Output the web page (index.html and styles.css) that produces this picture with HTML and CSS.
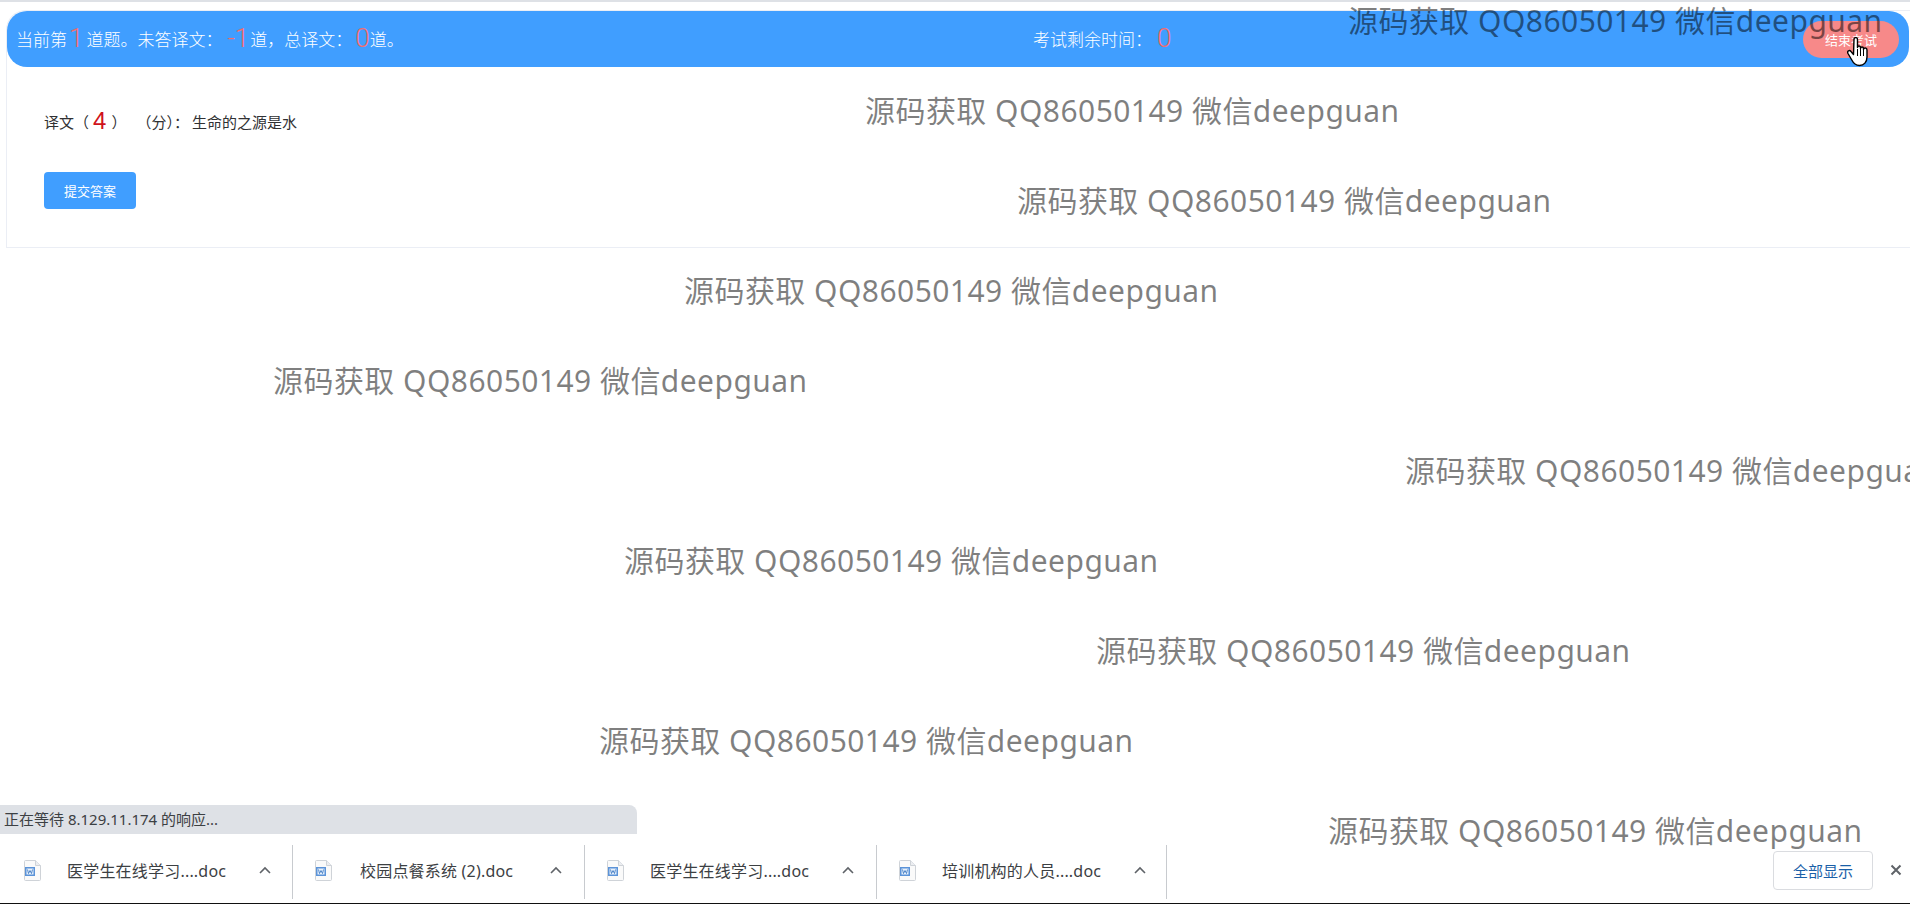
FILE: index.html
```html
<!DOCTYPE html>
<html lang="zh-CN">
<head>
    <meta charset="UTF-8">
    <title>考试</title>
    <link rel="stylesheet" href="styles.css">
</head>
<body>
    <div class="top-strip"></div>
    <main class="page">
        <section class="exam-card">
            <header class="exam-bar">
                <div class="exam-progress">当前第<span class="num num-first">1</span>道题。未答译文：<span class="num num-left">-1</span>道，总译文：<span class="num num-total">0</span>道。</div>
                <div class="exam-time">考试剩余时间：<span class="num num-time">0</span></div>
                <button class="end-btn">结束考试</button>
            </header>
            <div class="question">
                <span>译文（</span><span class="score">4</span><span>）</span><span class="unit">（分）：</span><span class="question-text">生命的之源是水</span>
            </div>
            <button class="submit-btn">提交答案</button>
        </section>
    </main>

    <div class="status-bubble">正在等待 8.129.11.174 的响应...</div>
    <footer class="shelf">
        <div class="shelf-item">
            <svg class="doc-icon" viewBox="0 0 17 21"><path d="M1.5.5h10l5 5v14a1 1 0 0 1-1 1h-14a1 1 0 0 1-1-1V1.500a1 1 0 0 1 1-1z" fill="#fafafa" stroke="#cfd3d8"/><path d="M11.500.5v5h5" fill="#eceef1" stroke="#cfd3d8"/><rect x="1" y="7" width="10" height="9" fill="#5b93d8"/><rect x="2.500" y="8.500" width="7" height="6" fill="#e6f0fb"/><path d="M3.500 9.500l1 4 1.500-3 1.500 3 1-4" fill="none" stroke="#2f6fbe" stroke-width=".8"/></svg>
            <span class="file-name">医学生在线学习....doc</span>
            <svg class="chevron" viewBox="0 0 12 8"><path d="M1 7l5-5 5 5" fill="none" stroke="#5f6368" stroke-width="1.600"/></svg>
        </div>
        <div class="shelf-item">
            <svg class="doc-icon" viewBox="0 0 17 21"><path d="M1.5.5h10l5 5v14a1 1 0 0 1-1 1h-14a1 1 0 0 1-1-1V1.500a1 1 0 0 1 1-1z" fill="#fafafa" stroke="#cfd3d8"/><path d="M11.500.5v5h5" fill="#eceef1" stroke="#cfd3d8"/><rect x="1" y="7" width="10" height="9" fill="#5b93d8"/><rect x="2.500" y="8.500" width="7" height="6" fill="#e6f0fb"/><path d="M3.500 9.500l1 4 1.500-3 1.500 3 1-4" fill="none" stroke="#2f6fbe" stroke-width=".8"/></svg>
            <span class="file-name file-name-wide">校园点餐系统 (2).doc</span>
            <svg class="chevron" viewBox="0 0 12 8"><path d="M1 7l5-5 5 5" fill="none" stroke="#5f6368" stroke-width="1.600"/></svg>
        </div>
        <div class="shelf-item">
            <svg class="doc-icon" viewBox="0 0 17 21"><path d="M1.5.5h10l5 5v14a1 1 0 0 1-1 1h-14a1 1 0 0 1-1-1V1.500a1 1 0 0 1 1-1z" fill="#fafafa" stroke="#cfd3d8"/><path d="M11.500.5v5h5" fill="#eceef1" stroke="#cfd3d8"/><rect x="1" y="7" width="10" height="9" fill="#5b93d8"/><rect x="2.500" y="8.500" width="7" height="6" fill="#e6f0fb"/><path d="M3.500 9.500l1 4 1.500-3 1.500 3 1-4" fill="none" stroke="#2f6fbe" stroke-width=".8"/></svg>
            <span class="file-name">医学生在线学习....doc</span>
            <svg class="chevron" viewBox="0 0 12 8"><path d="M1 7l5-5 5 5" fill="none" stroke="#5f6368" stroke-width="1.600"/></svg>
        </div>
        <div class="shelf-item">
            <svg class="doc-icon" viewBox="0 0 17 21"><path d="M1.5.5h10l5 5v14a1 1 0 0 1-1 1h-14a1 1 0 0 1-1-1V1.500a1 1 0 0 1 1-1z" fill="#fafafa" stroke="#cfd3d8"/><path d="M11.500.5v5h5" fill="#eceef1" stroke="#cfd3d8"/><rect x="1" y="7" width="10" height="9" fill="#5b93d8"/><rect x="2.500" y="8.500" width="7" height="6" fill="#e6f0fb"/><path d="M3.500 9.500l1 4 1.500-3 1.500 3 1-4" fill="none" stroke="#2f6fbe" stroke-width=".8"/></svg>
            <span class="file-name">培训机构的人员....doc</span>
            <svg class="chevron" viewBox="0 0 12 8"><path d="M1 7l5-5 5 5" fill="none" stroke="#5f6368" stroke-width="1.600"/></svg>
        </div>
        <button class="show-all">全部显示</button>
        <svg class="shelf-close" viewBox="0 0 12 12"><path d="M1.500 1.500l9 9M10.500 1.500l-9 9" fill="none" stroke="#5f6368" stroke-width="2"/></svg>
    </footer>

    <!-- watermark layer, sits over the whole page -->
    <div class="watermarks">
        <div class="wm wm-1">源码获取 QQ86050149 微信deepguan</div>
        <div class="wm wm-2">源码获取 QQ86050149 微信deepguan</div>
        <div class="wm wm-3">源码获取 QQ86050149 微信deepguan</div>
        <div class="wm wm-4">源码获取 QQ86050149 微信deepguan</div>
        <div class="wm wm-5">源码获取 QQ86050149 微信deepguan</div>
        <div class="wm wm-6">源码获取 QQ86050149 微信deepguan</div>
        <div class="wm wm-7">源码获取 QQ86050149 微信deepguan</div>
        <div class="wm wm-8">源码获取 QQ86050149 微信deepguan</div>
        <div class="wm wm-9">源码获取 QQ86050149 微信deepguan</div>
        <div class="wm wm-10">源码获取 QQ86050149 微信deepguan</div>
    </div>

    <!-- mouse pointer caught in the capture -->
    <svg class="hand-cursor" viewBox="0 0 22 30"><path d="M7 2.500c0-2.500 3.500-2.500 3.500 0v8c0-2 3-2 3 0v1c0-2 3-2 3 0v1c0-2 3.500-2 3.500 .5v7c0 5-3 8.500-7.500 8.500-4 0-6-2-8-6l-3.500-6c-1.200-2.500 1.500-4 3-2l2.500 3z" fill="#fff" stroke="#000" stroke-width="1.400" stroke-linejoin="round"/><path d="M10.500 12v7M13.500 12v7M16.500 13v6" fill="none" stroke="#000"/></svg>
</body>
</html>
```

FILE: styles.css
```css
html, body { margin: 0; height: 100%; }
body { position: relative; display: flex; flex-direction: column; height: 904px; overflow: hidden; background: #fff; color: #303133; font-family: "Noto Sans", "Noto Sans CJK SC", sans-serif; }
button { font-family: inherit; border: none; padding: 0; }

.top-strip { height: 2px; background: #dee1e6; flex: none; }
.page { flex: 1; padding: 8px 0 0 6px; min-height: 0; }

.exam-card { height: 238px; box-sizing: border-box; border: 1px solid #ebeef5; border-right: none; border-top-left-radius: 20px; }
.exam-bar { display: grid; grid-template-columns: 1017px 1fr auto; align-items: center; height: 56px; margin-right: 1px; padding: 0 10px 0 9px; background: #409eff; border-radius: 20px; color: #fff; font-size: 17px; font-weight: 300; }
.exam-progress, .exam-time { white-space: nowrap; line-height: 52px; }
.num { font-family: Roboto, sans-serif; font-weight: 300; font-size: 26px; color: #f56c6c; vertical-align: -1px; }
.num-first { margin: 0 3px 0 2px; }
.num-left { margin: 0 1px 0 5px; }
.num-total { margin: 0 0 0 3px; }
.num-time { margin-left: 5px; }
.end-btn { width: 96px; height: 37px; border-radius: 20px; background: #f78989; color: #fff; font-size: 13px; }

.question { display: flex; align-items: center; height: 30px; margin: 40px 0 0 37px; font-size: 15px; line-height: 30px; }
.score { font-family: "Liberation Sans", sans-serif; font-size: 24px; color: #d0121b; margin: -3px 5px 0 4px; }
.unit { margin-left: 10px; }
.question-text { margin-left: 3px; }
.submit-btn { display: block; width: 92px; height: 37px; margin: 35px 0 0 37px; border-radius: 4px; background: #409eff; color: #fff; font-size: 13px; }

.status-bubble { flex: none; box-sizing: border-box; width: 637px; height: 29px; padding-left: 4px; background: #dee1e6; border-radius: 0 8px 0 0; font-size: 15px; line-height: 29px; color: #3c4043; }
.shelf { flex: none; display: flex; align-items: center; box-sizing: border-box; height: 70px; padding-top: 1px; background: #fff; border-bottom: 1px solid #111; }
.shelf-item { display: flex; align-items: center; box-sizing: border-box; width: 292px; height: 54px; margin-top: 6px; padding: 0 0 4px 22px; border-right: 1px solid #c8cbcf; }
.shelf-item:first-child { width: 293px; padding-left: 24px; }
.shelf-item:last-of-type { width: 290px; }
.doc-icon { width: 17px; height: 21px; flex: none; }
.file-name { width: 192px; margin-left: 26px; font-size: 16px; letter-spacing: .2px; color: #3c4043; white-space: nowrap; }
.file-name-wide { margin-left: 28px; width: 190px; }
.chevron { width: 12px; height: 8px; flex: none; }
.show-all { width: 100px; height: 39px; margin: 2px 0 0 auto; background: #fff; border: 1px solid #dadce0; border-radius: 4px; color: #1a5fa8; font-size: 15px; }
.shelf-close { width: 12px; height: 12px; margin: 2px 8px 0 17px; flex: none; }

.watermarks { position: absolute; top: 0; left: 0; width: 100%; height: 100%; overflow: hidden; pointer-events: none; }
.wm { height: 90px; line-height: 42px; font-size: 30px; letter-spacing: .45px; color: rgba(0, 0, 0, .5); white-space: nowrap; }
.wm-1 { margin-left: 1348px; }
.wm-2 { margin-left: 865px; }
.wm-3 { margin-left: 1017px; }
.wm-4 { margin-left: 684px; }
.wm-5 { margin-left: 273px; }
.wm-6 { margin-left: 1405px; }
.wm-7 { margin-left: 624px; }
.wm-8 { margin-left: 1096px; }
.wm-9 { margin-left: 599px; }
.wm-10 { margin-left: 1328px; }

.hand-cursor { position: absolute; top: 37px; left: 1847px; width: 22px; height: 30px; }
```
